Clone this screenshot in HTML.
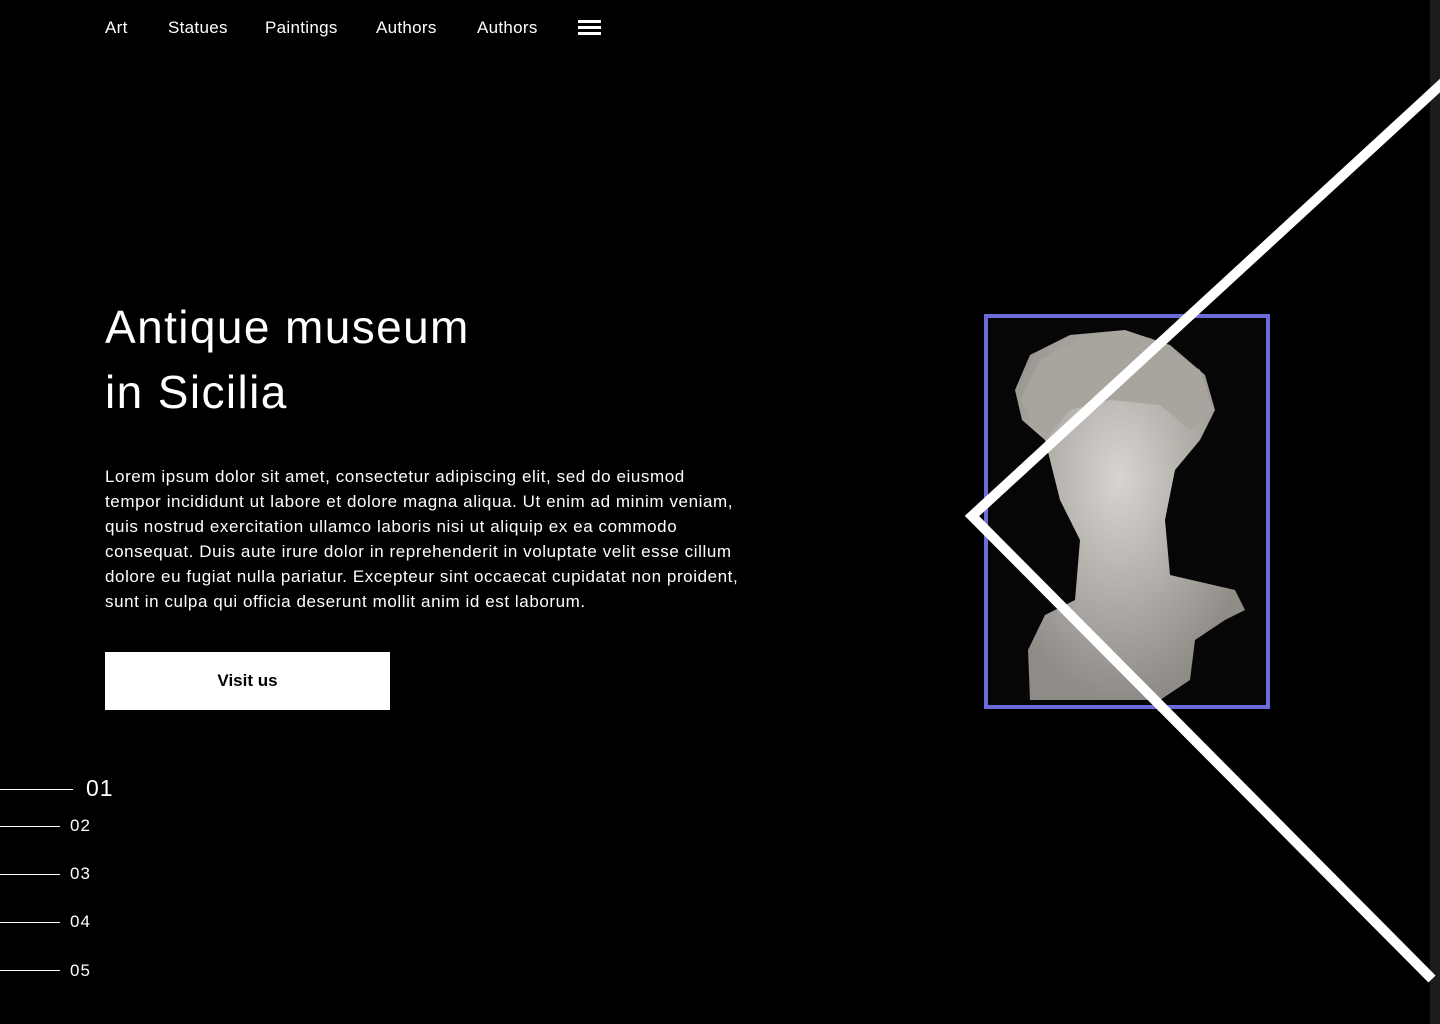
<!DOCTYPE html>
<html><head><meta charset="utf-8"><style>
*{margin:0;padding:0;box-sizing:border-box}
body{width:1440px;height:1024px;background:#000;color:#fff;font-family:"Liberation Sans",sans-serif;position:relative;overflow:hidden}
.strip{position:absolute;right:0;top:0;width:10px;height:1024px;background:#1c1c1c}
nav a{position:absolute;top:18px;font-size:17px;color:#fff;text-decoration:none;letter-spacing:0.3px}
.burger{position:absolute;left:578px;top:20px;width:23px}
.burger i{display:block;height:3px;background:#fff;margin-bottom:3px}
h1{position:absolute;left:105px;top:295px;font-weight:300;font-size:46px;line-height:65px;letter-spacing:1.4px}
p{position:absolute;left:105px;top:464px;font-size:17px;line-height:25px;white-space:nowrap;letter-spacing:0.58px}
.btn{position:absolute;left:105px;top:652px;width:285px;height:58px;background:#fff;color:#000;font-weight:bold;font-size:17px;text-align:center;line-height:58px}
.n{position:absolute;font-size:17px;letter-spacing:1px}
.l{position:absolute;left:0;height:1px;background:#fff}
</style></head><body>
<nav>
<a style="left:105px">Art</a><a style="left:168px">Statues</a><a style="left:265px">Paintings</a><a style="left:376px">Authors</a><a style="left:477px">Authors</a>
</nav>
<div class="burger"><i></i><i></i><i></i></div>
<h1>Antique museum<br>in Sicilia</h1>
<p>Lorem ipsum dolor sit amet, consectetur adipiscing elit, sed do eiusmod<br>tempor incididunt ut labore et dolore magna aliqua. Ut enim ad minim veniam,<br>quis nostrud exercitation ullamco laboris nisi ut aliquip ex ea commodo<br>consequat. Duis aute irure dolor in reprehenderit in voluptate velit esse cillum<br>dolore eu fugiat nulla pariatur. Excepteur sint occaecat cupidatat non proident,<br>sunt in culpa qui officia deserunt mollit anim id est laborum.</p>
<div class="btn">Visit us</div>
<div class="l" style="top:789px;width:73px"></div><div class="n" style="left:86px;top:775px;font-size:23px;font-weight:300">01</div>
<div class="l" style="top:826px;width:60px"></div><div class="n" style="left:70px;top:816px">02</div>
<div class="l" style="top:874px;width:60px"></div><div class="n" style="left:70px;top:864px">03</div>
<div class="l" style="top:922px;width:60px"></div><div class="n" style="left:70px;top:912px">04</div>
<div class="l" style="top:970px;width:60px"></div><div class="n" style="left:70px;top:961px">05</div>
<div class="strip"></div>
<svg width="1440" height="1024" style="position:absolute;left:0;top:0">
<defs><radialGradient id="g" cx="0.45" cy="0.4" r="0.6"><stop offset="0" stop-color="#d8d5d0"/><stop offset="1" stop-color="#8f8b86"/></radialGradient></defs>
<rect x="986" y="316" width="282" height="391" fill="#060606"/>
<path d="M1030 700 L1028 650 L1045 615 L1075 600 L1080 540 L1060 500 L1045 440 L1022 420 L1015 390 L1030 355 L1070 335 L1125 330 L1170 345 L1205 375 L1215 410 L1200 440 L1175 470 L1165 520 L1170 575 L1235 590 L1245 610 L1225 620 L1195 640 L1190 680 L1160 700 Z" fill="url(#g)"/>
<path d="M1020 400 L1040 360 L1090 335 L1150 338 L1200 370 L1212 410 L1190 430 L1160 405 L1110 400 L1070 410 L1045 440 Z" fill="#a9a49e"/>
<rect x="986" y="316" width="282" height="391" fill="none" stroke="#6b6bdc" stroke-width="4"/>
<polyline points="1445,81 972,516 1432,979" fill="none" stroke="#fff" stroke-width="10"/>
</svg>
</body></html>
